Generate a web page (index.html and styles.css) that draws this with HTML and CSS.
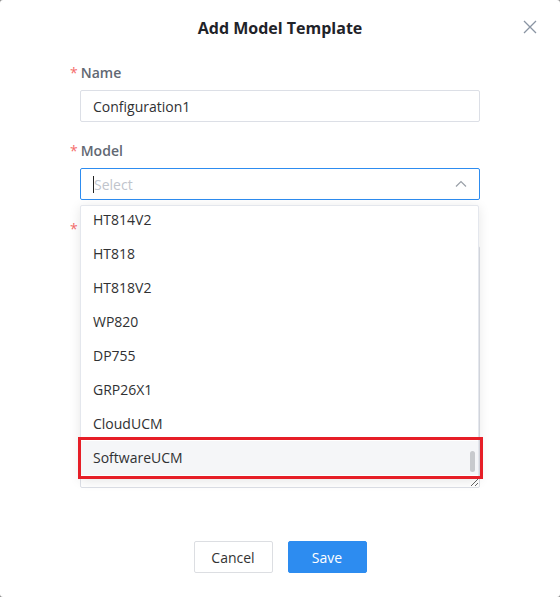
FILE: index.html
```html
<!DOCTYPE html>
<html lang="en">
  <head>
    <meta charset="UTF-8" />
    <meta name="viewport" content="width=device-width, initial-scale=1.0" />
    <title>Add Model Template</title>
    <link rel="stylesheet" href="styles.css">
  </head>
  <body>
    <!-- Modal -->
    <div class="modal">
      <div class="modal-header">
        <h3>Add Model Template</h3>
        <button class="close-btn" aria-label="Close">
          <svg width="14" height="14" viewBox="0 0 14 14">
            <path d="M1 1L13 13M13 1L1 13" stroke="#8a94a3" stroke-width="1.3" fill="none" />
          </svg>
        </button>
      </div>

      <form class="form">
        <div class="field">
          <label><span class="req">*</span>Name</label>
          <input type="text" class="input" value="Configuration1" />
        </div>

        <div class="field">
          <label><span class="req">*</span>Model</label>
          <div class="select">
            <span class="caret"></span>
            <span class="placeholder">Select</span>
            <svg class="arrow" width="12" height="8" viewBox="0 0 12 8">
              <path d="M1 6.5L6 1.5L11 6.5" stroke="#9aa0a8" stroke-width="1.2" fill="none" />
            </svg>
          </div>
        </div>

        <div class="field field-last">
          <label aria-label="Content"><span class="req">*</span></label>
          <textarea class="textarea"></textarea>
        </div>

        <!-- Model dropdown (open) -->
        <div class="dropdown">
          <ul>
            <li>HT814V2</li>
            <li>HT818</li>
            <li>HT818V2</li>
            <li>WP820</li>
            <li>DP755</li>
            <li>GRP26X1</li>
            <li>CloudUCM</li>
            <li class="hover">SoftwareUCM</li>
          </ul>
          <div class="scroll-thumb"></div>
        </div>
        <div class="mark"></div>
      </form>

      <div class="modal-footer">
        <button class="btn">Cancel</button>
        <button class="btn btn-primary">Save</button>
      </div>
    </div>
  </body>
</html>
```

FILE: styles.css
```css
body {
  font-family: "Open Sans", "Noto Sans", Arial, sans-serif;
  margin: 0;
  padding: 0;
  background-color: #8c8c8c;
}

/* Modal box */
.modal {
  background-color: #fff;
  height: 597px;
  border-radius: 3px;
  display: flex;
  flex-direction: column;
}

.modal-header {
  position: relative;
  padding: 16px 0 0;
  text-align: center;
}

.modal-header h3 {
  margin: 0;
  font-size: 16px;
  line-height: 24px;
  font-weight: 700;
  color: #1f2329;
}

.close-btn {
  position: absolute;
  top: 20px;
  right: 23px;
  border: none;
  background: none;
  padding: 0;
  cursor: pointer;
  display: flex;
}

/* Form */
.form {
  position: relative;
  padding: 22px 80px 0;
}

.field {
  margin-bottom: 18px;
}

.field-last {
  margin-bottom: 0;
}

.field label {
  display: block;
  height: 22px;
  font-size: 14px;
  line-height: 22px;
  font-weight: 600;
  color: #626873;
  margin-bottom: 6px;
}

.req {
  color: #f56c6c;
  margin-left: -10px;
  margin-right: 3px;
  font-weight: 400;
}

.input {
  box-sizing: border-box;
  width: 100%;
  height: 32px;
  padding: 0 12px;
  border: 1px solid #dcdfe6;
  border-radius: 2px;
  font-family: inherit;
  font-size: 14px;
  color: #303133;
  outline: none;
}

.select {
  box-sizing: border-box;
  height: 32px;
  border: 1px solid #2d8cf0;
  border-radius: 2px;
  display: flex;
  align-items: center;
  padding: 0 12px;
  font-size: 14px;
}

.caret {
  width: 1px;
  height: 17px;
  background-color: #222;
}

.placeholder {
  color: #c0c4cc;
  flex: 1;
}

.textarea {
  box-sizing: border-box;
  display: block;
  width: 100%;
  height: 242px;
  border: 1px solid #dcdfe6;
  border-radius: 2px;
  resize: vertical;
  font-family: inherit;
}

/* Open dropdown */
.dropdown {
  position: absolute;
  top: 165px;
  left: 80px;
  width: 399px;
  height: 274px;
  box-sizing: border-box;
  overflow: hidden;
  background-color: #fff;
  border: 1px solid #e4e7ed;
  border-radius: 2px;
  box-shadow: 0 2px 12px rgba(0, 0, 0, 0.1);
}

.dropdown ul {
  list-style: none;
  margin: -3px 0 0;
  padding: 0;
}

.dropdown li {
  height: 34px;
  line-height: 34px;
  padding: 0 12px;
  font-size: 14px;
  color: #303133;
}

.dropdown li.hover {
  background-color: #f5f6f8;
}

.scroll-thumb {
  position: absolute;
  right: 3px;
  top: 245px;
  width: 5px;
  height: 21px;
  border-radius: 3px;
  background-color: #c8cacd;
}

.mark {
  position: absolute;
  top: 397px;
  left: 78px;
  width: 399px;
  height: 36px;
  border: 3px solid #e61e27;
}

/* Footer buttons */
.modal-footer {
  display: flex;
  justify-content: center;
  gap: 15px;
  margin-top: 53px;
}

.btn {
  width: 79px;
  height: 32px;
  border: 1px solid #dcdee2;
  border-radius: 2px;
  background-color: #fff;
  font-family: inherit;
  font-size: 14px;
  color: #333;
  cursor: pointer;
}

.btn-primary {
  background-color: #2d8cf0;
  border-color: #2d8cf0;
  color: #fff;
}
```
